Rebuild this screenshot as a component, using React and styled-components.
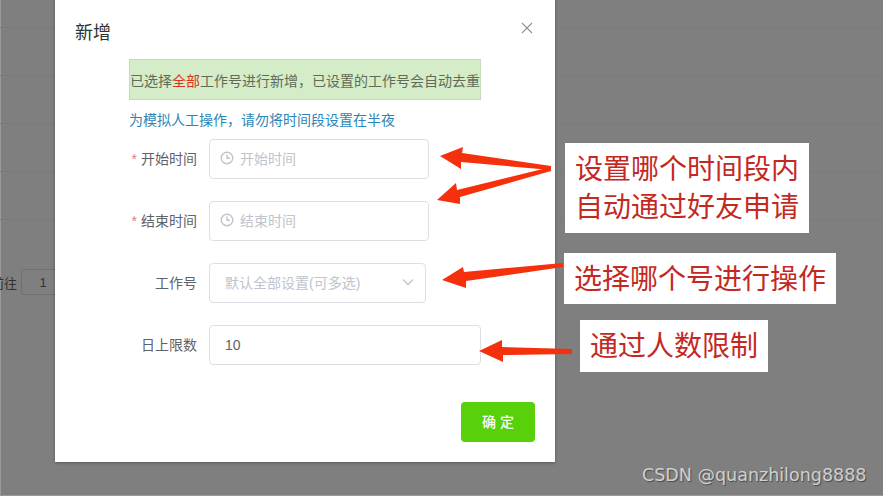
import React from 'react';
import styled, { createGlobalStyle } from 'styled-components';

const FONT = `"Liberation Sans", "Noto Sans CJK SC", sans-serif`;

const Global = createGlobalStyle`
  html, body { margin: 0; padding: 0; background: #7f7f7f; }
  body { font-family: ${FONT}; }
`;

const Page = styled.div`
  position: relative;
  width: 883px;
  height: 496px;
  overflow: hidden;
  background: #7f7f7f;
  box-shadow: inset 1px -1px 0 #9a9a9a;
`;

const Table = styled.div`
  display: flex;
  flex-direction: column;
  padding-top: 27px;
`;

const TableRow = styled.div`
  height: 48px;
  border-top: 1px solid #7a7a7a;
  box-sizing: border-box;
`;

const Pager = styled.div`
  display: flex;
  align-items: center;
  gap: 4px;
  margin: 2px 0 0 -9px;
  font-size: 13px;
  color: #333;
`;

const PagerInput = styled.div`
  width: 44px;
  height: 26px;
  box-sizing: border-box;
  border: 1px solid #6f6f6f;
  border-radius: 3px;
  display: flex;
  align-items: center;
  justify-content: center;
`;

const Modal = styled.div`
  position: absolute;
  left: 55px;
  top: -10px;
  width: 500px;
  height: 472px;
  box-sizing: border-box;
  background: #fff;
  box-shadow: 0 1px 3px rgba(0, 0, 0, 0.3);
  padding: 10px 20px 20px;
  display: flex;
  flex-direction: column;
`;

const Header = styled.div`
  display: flex;
  justify-content: space-between;
  align-items: flex-start;
  height: 59px;
  padding-top: 21px;
  box-sizing: border-box;
`;

const Title = styled.div`
  font-size: 18px;
  line-height: 24px;
  color: #303133;
`;

const Close = styled.div`
  margin: 0 1px 0 0;
  line-height: 0;
`;

const Body = styled.div`
  display: flex;
  flex-direction: column;
  padding-left: 54px;
  flex: 1;
`;

const Alert = styled.div`
  width: 352px;
  height: 41px;
  box-sizing: border-box;
  display: flex;
  align-items: center;
  white-space: nowrap;
  background: #d5ecc8;
  border: 1px solid #c6dcb9;
  font-size: 14px;
  color: #5f6b58;
`;

const Red = styled.span`
  color: #e0301e;
`;

const Hint = styled.div`
  margin-top: 10px;
  height: 20px;
  line-height: 20px;
  font-size: 14px;
  color: #2b86b6;
  white-space: nowrap;
`;

const Form = styled.div`
  margin-top: 9px;
  display: flex;
  flex-direction: column;
  gap: 22px;
`;

const Row = styled.div`
  display: flex;
  align-items: center;
  height: 40px;
`;

const Label = styled.div`
  width: 68px;
  margin-right: 12px;
  padding-bottom: 2px;
  text-align: right;
  font-size: 14px;
  color: #606266;
  white-space: nowrap;
`;

const Star = styled.span`
  color: #d9808a;
  margin-right: 4px;
`;

const Field = styled.div`
  width: ${p => p.$w}px;
  height: 40px;
  box-sizing: border-box;
  border: 1px solid #dcdfe6;
  border-radius: 4px;
  display: flex;
  align-items: center;
  gap: 6px;
  padding: 0 ${p => p.$pad || 10}px ${p => (p.$value ? 0 : 2)}px;
  font-size: 14px;
  color: ${p => (p.$value ? '#606266' : '#c0c4cc')};
  white-space: nowrap;
`;

const Spacer = styled.div`
  flex: 1;
`;

const Footer = styled.div`
  display: flex;
  justify-content: flex-end;
`;

const Confirm = styled.button`
  width: 74px;
  height: 40px;
  border: none;
  border-radius: 4px;
  background: #58d10a;
  color: #fff;
  font-family: ${FONT};
  font-size: 14px;
  font-weight: 500;
  letter-spacing: 4px;
  padding: 0 0 2px 4px;
`;

const Arrows = styled.svg`
  position: absolute;
  left: 0;
  top: 0;
  pointer-events: none;
`;

const Callout = styled.div`
  position: absolute;
  left: ${p => p.$x}px;
  top: ${p => p.$y}px;
  width: ${p => p.$w}px;
  height: ${p => p.$h}px;
  box-sizing: border-box;
  padding-top: 2px;
  background: #fff;
  color: #c4291f;
  font-size: 28px;
  line-height: 38px;
  white-space: nowrap;
  display: flex;
  flex-direction: column;
  align-items: center;
  justify-content: center;
`;

const Watermark = styled.div`
  position: absolute;
  left: 642px;
  top: 463px;
  font-family: "DejaVu Sans", sans-serif;
  font-size: 17.5px;
  line-height: 24px;
  color: #d0d0d0;
  text-shadow: 1px 1px 1px #4a4a4a;
  white-space: nowrap;
`;

const ClockIcon = () => (
  <svg width="14" height="14" viewBox="0 0 14 14" fill="none" stroke="#c0c4cc" strokeWidth="1.4">
    <circle cx="7" cy="7" r="5.8" />
    <path d="M7 3.6V7.3H10" />
  </svg>
);

const CloseIcon = () => (
  <svg width="14" height="14" viewBox="0 0 14 14" fill="none" stroke="#909399" strokeWidth="1.1">
    <path d="M2 2L12 12M12 2L2 12" />
  </svg>
);

const ChevronIcon = styled(({ className }) => (
  <svg className={className} width="12" height="8" viewBox="0 0 12 8" fill="none" stroke="#c0c4cc" strokeWidth="1.4">
    <path d="M1 1.5L6 6.5L11 1.5" />
  </svg>
))`
  margin-right: -4px;
`;

const rows = [0, 1, 2, 3, 4];

export default function App() {
  return (
    <Page>
      <Global />
      <Table>
        {rows.map(r => <TableRow key={r} />)}
        <Pager>
          <span>前往</span>
          <PagerInput>1</PagerInput>
        </Pager>
      </Table>

      <Modal>
        <Header>
          <Title>新增</Title>
          <Close><CloseIcon /></Close>
        </Header>
        <Body>
          <Alert>已选择<Red>全部</Red>工作号进行新增，已设置的工作号会自动去重</Alert>
          <Hint>为模拟人工操作，请勿将时间段设置在半夜</Hint>
          <Form>
            <Row>
              <Label><Star>*</Star>开始时间</Label>
              <Field $w={220}><ClockIcon />开始时间</Field>
            </Row>
            <Row>
              <Label><Star>*</Star>结束时间</Label>
              <Field $w={220}><ClockIcon />结束时间</Field>
            </Row>
            <Row>
              <Label>工作号</Label>
              <Field $w={217} $pad={15}>默认全部设置(可多选)<Spacer /><ChevronIcon /></Field>
            </Row>
            <Row>
              <Label>日上限数</Label>
              <Field $w={272} $pad={15} $value>10</Field>
            </Row>
          </Form>
          <Spacer />
          <Footer>
            <Confirm>确定</Confirm>
          </Footer>
        </Body>
      </Modal>

      <Arrows width="883" height="496" viewBox="0 0 883 496" fill="#f5300c">
        <path d="M440 156L463 147L462 153L551 166V170L461 162L461 169Z" />
        <path d="M437 200L456 183L457 190L551 167V171L460 197L460 204Z" />
        <path d="M442 280L463 267L464 272L563 263V267L466 281L466 288Z" />
        <path d="M479 351L502 340L502 347L572 349V354L503 355L503 362Z" />
      </Arrows>

      <Callout $x={565} $y={143} $w={244} $h={90}>
        <span>设置哪个时间段内</span>
        <span>自动通过好友申请</span>
      </Callout>
      <Callout $x={564} $y={253} $w={272} $h={51}>选择哪个号进行操作</Callout>
      <Callout $x={580} $y={320} $w={188} $h={52}>通过人数限制</Callout>

      <Watermark>CSDN @quanzhilong8888</Watermark>
    </Page>
  );
}
